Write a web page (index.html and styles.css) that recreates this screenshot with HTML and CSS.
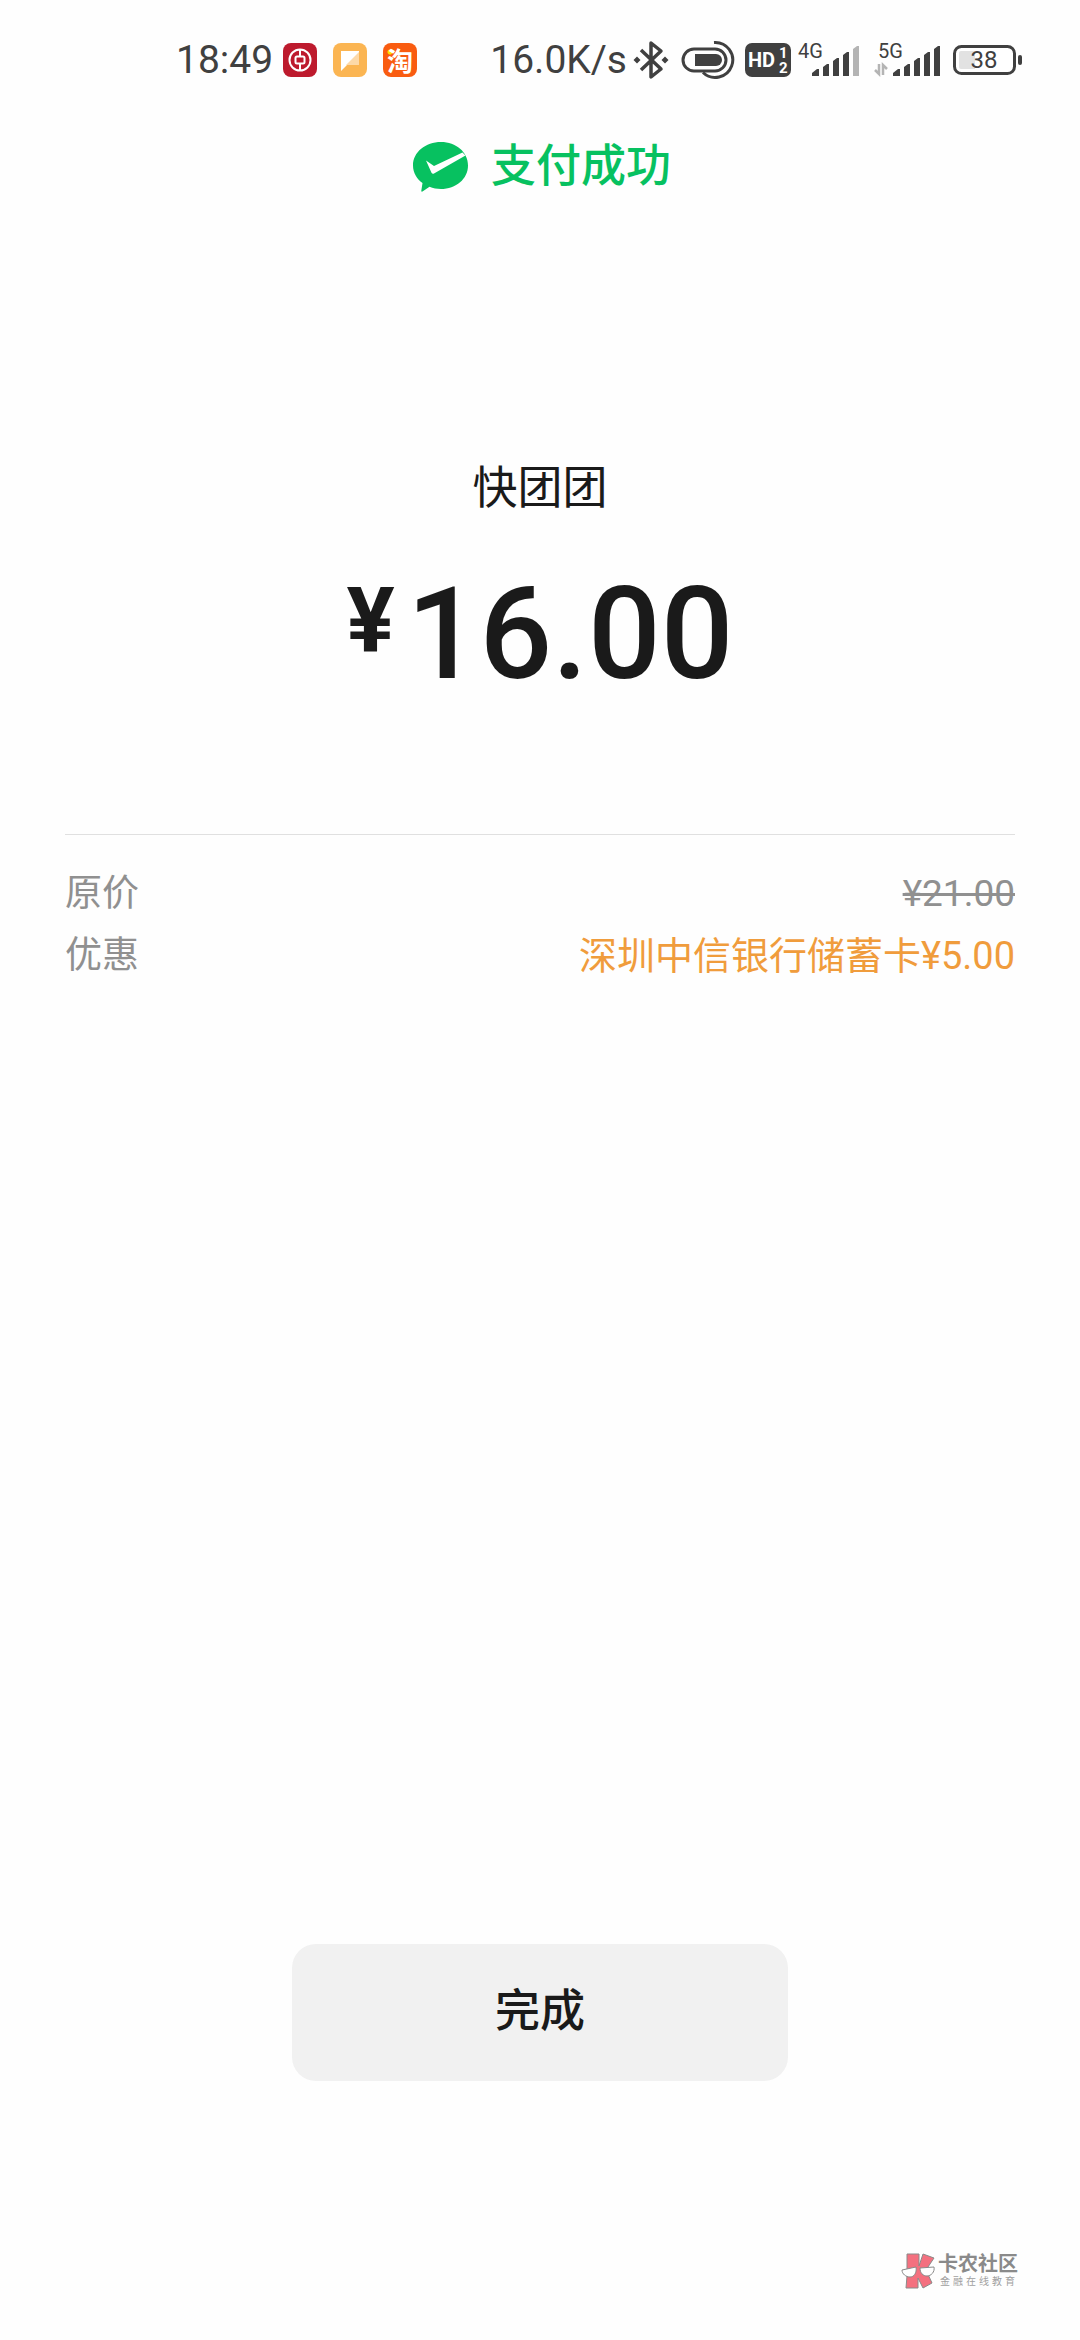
FILE: index.html
```html
<!DOCTYPE html>
<html lang="zh-CN">
<head>
<meta charset="utf-8">
<meta name="viewport" content="width=device-width, initial-scale=1">
<title>支付成功</title>
<link rel="stylesheet" href="styles.css">
</head>
<body>
<div class="page">
  <div class="status">
    <div class="status-left">
      <time class="status-text">18:49</time>
      <svg class="app" viewBox="0 0 34 34" width="34" height="34" aria-hidden="true">
        <rect width="34" height="34" rx="8" fill="#bd1a2d"/>
        <circle cx="17" cy="17" r="10.500" fill="none" stroke="#fff" stroke-width="2"/>
        <path d="M17 6.500v7M17 20.500v7" stroke="#fff" stroke-width="2"/>
        <rect x="12.500" y="13.500" width="9" height="7" rx="1.500" fill="none" stroke="#fff" stroke-width="2"/>
      </svg>
      <svg class="app" viewBox="0 0 34 34" width="34" height="34" aria-hidden="true">
        <rect width="34" height="34" rx="8" fill="#fbb552"/>
        <path d="M8 8h18v14H14l-6 6z" fill="#fff"/>
        <path d="M26 9v13H13z" fill="#fdd9a8"/>
      </svg>
      <span class="app-tao">淘</span>
    </div>
    <div class="status-right">
      <span class="status-text">16.0K/s</span>
      <svg class="bt" viewBox="0 0 36 40" width="36" height="40" aria-hidden="true">
        <path d="M8 10l20 19-10 8V3l10 8L8 30" fill="none" stroke="#404040" stroke-width="3.500" stroke-linejoin="round"/>
        <path d="M4 16.500l3.500 3.500L4 23.500.5 20zM32 16.500l3.500 3.500-3.500 3.500-3.500-3.500z" fill="#404040"/>
      </svg>
      <svg class="pill" viewBox="0 0 54 40" width="54" height="40" aria-hidden="true">
        <g fill="none" stroke="#404040" stroke-width="3">
          <rect x="2" y="9" width="43" height="22" rx="11"/>
          <path d="M33 2.500a17.500 17.500 0 1 1-11 30"/>
        </g>
        <path d="M14 14h21a6 6 0 0 1 0 12H14z" fill="#404040"/>
      </svg>
      <svg class="hd" viewBox="0 0 46 34" width="46" height="34" aria-hidden="true">
        <rect width="46" height="34" rx="7" fill="#404040"/>
        <text x="3" y="24" class="hd-big">HD</text>
        <text x="34" y="15" class="hd-small">1</text>
        <text x="34" y="30" class="hd-small">2</text>
      </svg>
      <svg class="signal" viewBox="0 -4 64 42" width="64" height="42" aria-hidden="true">
        <text x="1" y="15" class="net">4G</text>
        <path d="M15 33v-3l5-4h2v7zM26 33V24l4-3h2v12zM36 33V18l4-3h2v18zM46 33V12l4-3h2v24z" fill="#404040"/>
        <path d="M56 33V6l4-3h2v30z" fill="#b4b4b4"/>
      </svg>
      <svg class="signal" viewBox="0 -4 68 42" width="68" height="42" aria-hidden="true">
        <text x="5" y="15" class="net">5G</text>
        <path d="M6 21v10l-4-4M10 32V22l4 4" fill="none" stroke="#b4b4b4" stroke-width="2.500"/>
        <path d="M20 33v-3l5-4h2v7zM31 33V24l4-3h2v12zM41 33V18l4-3h2v18zM51 33V12l4-3h2v24zM61 33V6l4-3h2v30z" fill="#404040"/>
      </svg>
      <svg class="battery" viewBox="0 0 70 30" width="70" height="30" aria-hidden="true">
        <rect x="1.500" y="1.500" width="60" height="27" rx="7" fill="#fff" stroke="#404040" stroke-width="3"/>
        <path d="M8 6h14v18H8a2 2 0 0 1-2-2V8a2 2 0 0 1 2-2z" fill="#e2e2e2"/>
        <rect x="65" y="10" width="4" height="10" rx="2" fill="#404040"/>
        <text x="31" y="23" text-anchor="middle" class="level">38</text>
      </svg>
    </div>
  </div>

  <header class="result">
    <svg viewBox="0 0 56 50" width="56" height="50" aria-hidden="true">
      <path d="M28 0C43 0 55 10 55 23.500S43 47 28 47c-4 0-8-.8-11.500-2.200L9.500 49.500c-.7.400-1.300 0-1.200-.8l1.200-7.700C4 37 0 31 0 23.500 0 10 12.500 0 28 0z" fill="#07c160"/>
      <path d="M13 18.500l8 5.500L49.500 10.500l3 3L21 31.500c-1 .5-2 .2-2.500-.8z" fill="#fff"/>
    </svg>
    <h1 class="result-title">支付成功</h1>
  </header>

  <main class="main">
    <p class="payee">快团团</p>
    <p class="amount"><span class="currency">¥</span><span>16.00</span></p>
    <dl class="details">
      <div class="row">
        <dt>原价</dt>
        <dd><s>¥21.00</s></dd>
      </div>
      <div class="row">
        <dt>优惠</dt>
        <dd class="discount">深圳中信银行储蓄卡¥5.00</dd>
      </div>
    </dl>
    <button type="button" class="done">完成</button>
  </main>

  <footer class="mark">
    <svg viewBox="0 0 34 36" width="34" height="36" aria-hidden="true">
      <path d="M6 1h12v12l4-12 11 4-8 12 6 13-9 5-5-10v10H5l1-12z" fill="#f4707f" stroke="#8a8a8a" stroke-width="1"/>
      <path d="M1 17l14-3c1 6-2 10-6 10s-8-3-8-7zM19 15l14-1c1 5-3 9-7 9s-7-3-7-8z" fill="#fff" stroke="#8a8a8a" stroke-width="1"/>
    </svg>
    <div>
      <div class="mark-name">卡农社区</div>
      <div class="mark-tag">金融在线教育</div>
    </div>
  </footer>
</div>
</body>
</html>
```

FILE: styles.css
```css
* {
  box-sizing: border-box;
}

body {
  margin: 0;
  background: #fefefe;
  color: #1a1a1a;
  font-family: Roboto, "Noto Sans CJK SC", sans-serif;
}

h1, p, dl, dd {
  margin: 0;
}

svg {
  display: block;
  flex: none;
}

.page {
  display: flex;
  flex-direction: column;
  min-height: 100vh;
}

.status {
  display: flex;
  justify-content: space-between;
  padding: 36px 57px 0 176px;
  color: #404040;
}

.status-left,
.status-right {
  display: flex;
  align-items: center;
  height: 48px;
}

.status-left {
  gap: 16px;
}

.status-left .status-text {
  margin-right: -6px;
}

.status-text {
  font-size: 39px;
  line-height: 48px;
}

.app-tao {
  width: 34px;
  border-radius: 8px;
  background: radial-gradient(circle at 7px 9px, #ffe100 2px, transparent 3px), #f95c10;
  color: #fff;
  font: 700 26px/34px "Noto Sans CJK SC", sans-serif;
  text-align: center;
}

.bt {
  margin-left: 6px;
}

.pill,
.battery {
  margin-left: 12px;
}

.hd {
  margin-left: 10px;
}

.signal {
  margin-left: 6px;
}

.signal + .signal {
  margin-left: 12px;
}

.hd-big {
  font: 700 20px Roboto, sans-serif;
  fill: #fff;
}

.hd-small {
  font: 700 15px Roboto, sans-serif;
  fill: #fff;
}

.net {
  font: 400 20px Roboto, sans-serif;
  fill: #404040;
}

.level {
  font: 400 24px Roboto, sans-serif;
  fill: #404040;
}

.result {
  display: flex;
  align-items: center;
  justify-content: center;
  gap: 22px;
  padding: 50px 0 0 4px;
  color: #07c160;
}

.result-title {
  font-size: 45px;
  font-weight: 500;
  line-height: 66px;
}

.main {
  flex: 1;
  display: flex;
  flex-direction: column;
  align-items: center;
  padding: 256px 65px 0;
}

.payee {
  font-size: 45px;
  line-height: 66px;
}

.amount {
  display: flex;
  align-items: flex-start;
  gap: 12px;
  padding-top: 36px;
  font-size: 128px;
  font-weight: 500;
  line-height: 152px;
}

.currency {
  font-size: 90px;
  font-weight: 700;
  line-height: 128px;
}

.details {
  align-self: stretch;
  margin-top: 124px;
  padding-top: 28px;
  border-top: 1px solid #e0e0e0;
  color: #909090;
  font-size: 37px;
  line-height: 62px;
}

.row {
  display: flex;
  justify-content: space-between;
}

.discount {
  color: #f09c3c;
  font-size: 38px;
}

.done {
  width: 52.3%;
  margin-top: auto;
  padding: 35px 0 36px;
  border: 0;
  border-radius: 24px;
  background: #f1f1f1;
  color: #1a1a1a;
  font: 500 45px/66px Roboto, "Noto Sans CJK SC", sans-serif;
}

.mark {
  display: flex;
  justify-content: flex-end;
  gap: 3px;
  padding: 172px 62px 51px;
  color: #8a8a8a;
}

.mark-name {
  font-size: 20px;
  font-weight: 700;
  line-height: 22px;
}

.mark-tag {
  padding-left: 2px;
  color: #a0a0a0;
  font-size: 10px;
  letter-spacing: 3px;
  line-height: 14px;
}
```
